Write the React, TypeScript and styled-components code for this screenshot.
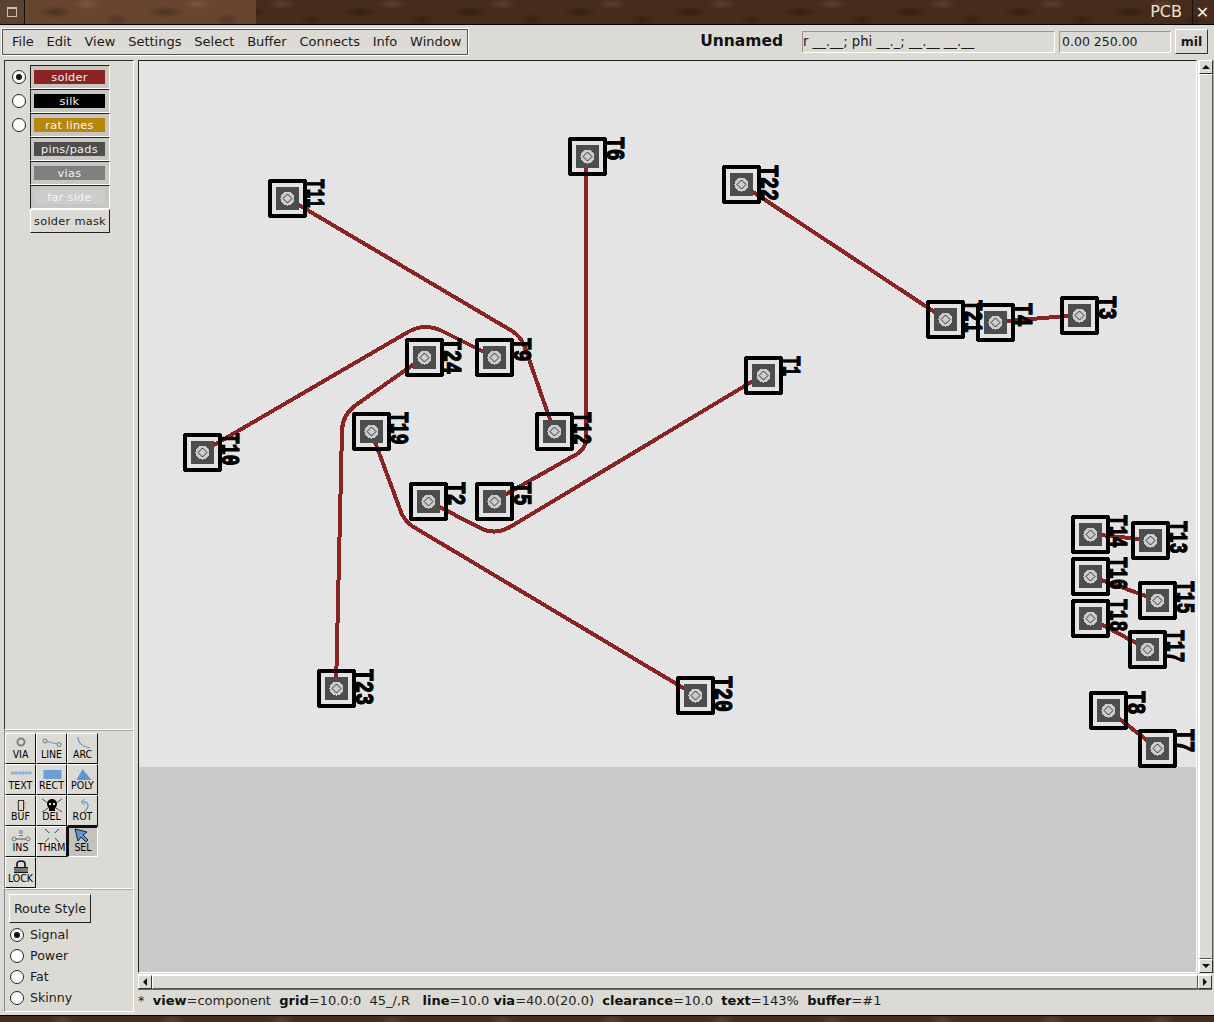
import React from "react";
import styled, { createGlobalStyle } from "styled-components";

const Global = createGlobalStyle`
  html, body { margin: 0; padding: 0; background: #3d2618; }
  #root { width: 1214px; height: 1022px; overflow: hidden; }
  * { box-sizing: border-box; }
`;

const wood = `
  radial-gradient(ellipse 26px 9px at 30px 12px, rgba(0,0,0,.28), transparent 70%),
  radial-gradient(ellipse 20px 8px at 62px 4px, rgba(255,220,180,.12), transparent 70%),
  radial-gradient(ellipse 18px 10px at 92px 20px, rgba(0,0,0,.22), transparent 70%)
`;

const Page = styled.div`
  width: 1214px; height: 1022px; display: flex; flex-direction: column;
  background: #dcdad5; font-family: "DejaVu Sans", sans-serif; color: #1a1a1a; font-size: 13px;
`;
const TitleBar = styled.div`
  height: 25px; flex: none; display: flex; align-items: stretch; border-bottom: 1px solid #000;
  background: ${wood}, #472c1b; background-size: 110px 24px; color: #eee6dc;
`;
const TitleCell = styled.div`
  width: 25px; flex: none; display: flex; align-items: center; justify-content: center;
  background: #5c4331; border-right: 1px solid #111;
`;
const WindowGlyph = styled.div`
  width: 10px; height: 10px; border: 1px solid #c9bfb2; border-top-width: 2px;
`;
const TitleWood = styled.div`
  width: 231px; flex: none; background: ${wood}, #68452e; background-size: 110px 24px;
`;
const TitleText = styled.div`
  flex: 1; text-align: right; font-size: 16px; line-height: 24px; padding-right: 10px; color: #e9e2d8;
`;
const CloseBox = styled.div`
  width: 22px; flex: none; border-left: 1px solid #111; display: flex; align-items: center; justify-content: center;
  font-size: 16px; font-weight: bold; color: #f3f0ea; padding-right: 2px;
`;
const TopRow = styled.div`
  height: 34px; flex: none; display: flex; align-items: center; padding: 0 6px 3px 1px;
`;
const MenuBar = styled.div`
  width: 468px; height: 28px; flex: none; display: flex; align-items: center; padding-left: 4px;
  border: 1px solid #fff; outline: 1px solid #555; outline-offset: -2px; margin-top: 2px;
`;
const MenuItem = styled.span`
  padding: 0 6.4px; white-space: nowrap; font-size: 13px;
  &:first-child { padding-left: 6px; }
`;
const FileName = styled.div`
  width: 333px; text-align: right; font-size: 15.5px; padding-right: 19px; flex: none;
  color: #111; font-weight: 700;
`;
const Readout = styled.div<{ $w: number; $fs: number; $pad: number }>`
  width: ${p => p.$w}px; height: 22px; flex: none; margin-right: 4px; padding-left: ${p => p.$pad}px;
  border: 1px solid #fff; border-top-color: #9a9892; border-left-color: #9a9892; line-height: 20px; font-size: ${p => p.$fs}px; white-space: nowrap;
  margin-top: 2px;
`;
const UnitButton = styled.div`
  width: 33px; height: 25px; flex: none; display: flex; align-items: center; justify-content: center; font-weight: bold;
  border: 1px solid #fff; border-right-color: #333; border-bottom-color: #333; font-size: 12.5px; margin-top: 2px;
`;
const Main = styled.div`
  flex: 1; display: flex; min-height: 0;
`;
const Sidebar = styled.div`
  width: 138px; flex: none; display: flex; flex-direction: column; padding: 1px 4px 3px 4px;
`;
const LayerPanel = styled.div`
  flex: 1; border: 1px solid #fff; border-top-color: #333; border-left-color: #333; padding: 4px 0 0 4px;
  display: flex; flex-direction: column;
`;
const LayerRow = styled.div`
  height: 24px; display: flex; align-items: center; padding-left: 21px; position: relative;
`;
const Radio = styled.span<{ $on?: boolean }>`
  width: 14px; height: 14px; border-radius: 50%; background: #fff; border: 1px solid #222; flex: none;
  display: flex; align-items: center; justify-content: center;
  &::after { content: ""; width: 6px; height: 6px; border-radius: 50%; background: ${p => (p.$on ? "#111" : "transparent")}; }
`;
const LayerRadio = styled(Radio)`
  position: absolute; left: 3px; top: 5px;
`;
const LayerButton = styled.div`
  width: 80px; height: 24px; padding: 4px 4px 4px 3px; background: #c8c6c0;
  border: 1px solid #fff; border-top-color: #222; border-left-color: #222;
`;
const LayerSwatch = styled.div<{ $c: string; $fg: string }>`
  height: 14px; background: ${p => p.$c}; color: ${p => p.$fg}; font-size: 11.3px; line-height: 15px;
  text-align: center; letter-spacing: .3px; white-space: nowrap;
`;
const MaskButton = styled.div`
  width: 80px; height: 24px; font-size: 11.3px; letter-spacing: .3px; line-height: 23px; text-align: center; white-space: nowrap;
  border: 1px solid #fff; border-right-color: #222; border-bottom-color: #222;
`;
const ToolPanel = styled.div`
  height: 159px; flex: none; padding: 2px 0 0 0; border: 1px solid #fff; border-left-color: #888; border-top-color: #aaa;
`;
const ToolGrid = styled.div`
  display: grid; grid-template-columns: repeat(3, 31px); grid-auto-rows: 31px;
`;
const ToolButton = styled.div<{ $on?: boolean }>`
  display: flex; flex-direction: column; align-items: center; justify-content: flex-start; padding-top: 1px;
  background: ${p => (p.$on ? "#c4c2bc" : "#dcdad5")};
  border: 1px solid #fff; border-right-color: #111; border-bottom-color: #111;
  ${p => p.$on && "border-color: #111 #fff #fff #111; border-width: 2px 1px 1px 2px; padding-top: 0;"}
  svg { display: block; flex: none; }
`;
const ToolLabel = styled.span`
  font-family: "DejaVu Sans Condensed", "Liberation Sans Narrow", sans-serif; font-size: 10.5px; line-height: 10px; color: #000; white-space: nowrap;
  margin-top: -2px;
`;
const RoutePanel = styled.div`
  height: 123px; flex: none; padding: 4px 0 0 4px; border: 1px solid #fff; border-left-color: #888; border-top-color: #aaa;
`;
const RouteButton = styled.div`
  width: 82px; height: 29px; display: flex; align-items: center; justify-content: center; font-size: 12.6px;
  border: 1px solid #fff; border-right-color: #222; border-bottom-color: #222; margin-bottom: 1px;
`;
const RouteRow = styled.div`
  height: 21px; display: flex; align-items: center; gap: 6px; padding-left: 1px; font-size: 12.6px;
`;
const Work = styled.div`
  flex: 1; min-width: 0; display: flex; flex-direction: column; padding-top: 1px;
`;
const CanvasRow = styled.div`
  display: flex; height: 913px; flex: none;
`;
const CanvasFrame = styled.div`
  width: 1059px; height: 913px; flex: none; border: 1px solid #fff; border-top: 1px solid #222; border-left: 1px solid #222;
  svg { display: block; overflow: visible; }
`;
const VScroll = styled.div`
  width: 16px; flex: none; margin-left: 1px; display: flex; flex-direction: column; border-left: 1px solid #fff; border-right: 1px solid #aaa;
`;
const HRow = styled.div`
  height: 16px; flex: none; margin-top: 1px; display: flex; border-top: 1px solid #fff; border-bottom: 1px solid #666; margin-right: 2px;
`;
const Arrow = styled.div<{ $dir: "up" | "down" | "left" | "right" }>`
  width: 14px; height: 14px; flex: none; display: flex; align-items: center; justify-content: center;
  border: 1px solid #fff; border-right-color: #333; border-bottom-color: #333;
  &::after {
    content: ""; width: 0; height: 0; border: 4px solid transparent;
    ${p => ({
      up: "border-bottom-color:#111; margin-top:-4px;",
      down: "border-top-color:#111; margin-top:4px;",
      left: "border-right-color:#111; margin-left:-4px;",
      right: "border-left-color:#111; margin-left:4px;",
    }[p.$dir])}
  }
`;
const Thumb = styled.div`
  flex: 1; border: 1px solid #fff; border-right-color: #555; border-bottom-color: #555;
`;
const StatusBar = styled.div`
  flex: none; height: 24px; display: flex; align-items: center; white-space: pre; font-size: 13px; color: #222;
  padding: 0 0 4px 0;
`;
const StatusValue = styled.span`
  font-size: 13px;
`;
const StatusKey = styled.b`
  font-weight: 700; color: #111; font-size: 13px;
`;
const BottomWood = styled.div`
  height: 7px; flex: none; border-top: 1px solid #000; background: ${wood}, #472c1b; background-size: 110px 24px;
`;
const PadLabel = styled.text`
  font-family: "Liberation Mono", monospace; font-weight: 700; font-size: 25px; fill: #000; stroke: #000; stroke-width: 1.2px;
`;

const layers = [
  { name: "solder", c: "#8b2323", fg: "#f2f2f2", radio: true, on: true },
  { name: "silk", c: "#000000", fg: "#f2f2f2", radio: true },
  { name: "rat lines", c: "#b8860b", fg: "#f6f6f6", radio: true },
  { name: "pins/pads", c: "#4d4d4d", fg: "#f2f2f2" },
  { name: "vias", c: "#7f7f7f", fg: "#f2f2f2" },
  { name: "far side", c: "#cccccc", fg: "#f4f4f4" },
];

const blue = "#5f97d2";
const icons: Record<string, React.ReactNode> = {
  VIA: <circle cx="11" cy="7" r="3.5" fill="none" stroke="#808080" strokeWidth="2" />,
  LINE: (
    <g fill="none" stroke="#777">
      <circle cx="4" cy="6" r="2" /><circle cx="18" cy="9.5" r="2" />
      <path d="M6 6.5 L16 9" stroke={blue} strokeWidth="1.2" />
    </g>
  ),
  ARC: <path d="M6 2 C6 8 11 12 18 13" fill="none" stroke={blue} strokeWidth="1.2" />,
  TEXT: (
    <g fill="none" stroke={blue} strokeWidth="0.9">
      {[2.5, 6, 9.5, 13, 16.5, 20].map(x => <circle key={x} cx={x} cy="7" r="1.2" />)}
    </g>
  ),
  RECT: <rect x="2.5" y="4" width="18" height="9" fill="#6a9fd8" />,
  POLY: <path d="M4.5 14 L10.5 3 L19.5 14 Z" fill={blue} />,
  BUF: (
    <g>
      <rect x="8.5" y="3.5" width="5" height="10" fill="none" stroke="#333" />
      <path d="M7 5h1.500M7 7h1.500M7 9h1.500M7 11h1.500M14 5h1.500M14 7h1.500M14 9h1.500M14 11h1.500" stroke="#b8912a" />
    </g>
  ),
  DEL: (
    <g>
      <path d="M1 2 L21 15 M21 2 L1 15" stroke="#555" strokeWidth="1" />
      <circle cx="11" cy="7" r="5" fill="#000" />
      <rect x="8" y="10" width="6" height="4" fill="#000" />
      <circle cx="9" cy="7" r="1.2" fill="#ddd" /><circle cx="13" cy="7" r="1.2" fill="#ddd" />
    </g>
  ),
  ROT: (
    <g>
      <path d="M11 5 C17 4 18 10 12 15" fill="none" stroke={blue} strokeWidth="1.3" />
      <path d="M13 2 L9 5 L13 8" fill="none" stroke={blue} strokeWidth="1" />
    </g>
  ),
  INS: (
    <g fill="none" stroke="#777">
      <circle cx="4" cy="11" r="2" /><circle cx="18" cy="11" r="2" />
      <path d="M6 11 H16" stroke="#555" /><circle cx="11" cy="4" r="1.5" /><path d="M9 7.500h4" />
    </g>
  ),
  THRM: (
    <g>
      <rect x="7" y="4" width="8" height="8" fill="#b8e8cc" />
      <path d="M4 1 L18 14 M18 1 L4 14" stroke="#444" />
      <rect x="8" y="5" width="6" height="6" fill="#dcdad5" />
    </g>
  ),
  SEL: <path d="M3 1 L6 13 L9 9 L14 14 L16 12 L11 7 L15 4 Z" fill={blue} stroke="#123" strokeWidth="1" />,
  LOCK: (
    <g>
      <path d="M7 8 V5 C7 1 15 1 15 5 V8" fill="none" stroke="#111" strokeWidth="1.6" />
      <rect x="4" y="8" width="14" height="6" fill="#111" />
      <path d="M4 10h14M4 12h14" stroke="#dcdad5" />
    </g>
  ),
};
const tools = ["VIA", "LINE", "ARC", "TEXT", "RECT", "POLY", "BUF", "DEL", "ROT", "INS", "THRM", "SEL", "LOCK"];

const pads: [string, number, number][] = [
  ["T6", 587, 156], ["T11", 287, 198], ["T22", 741, 184], ["T21", 945, 319], ["T4", 995, 322], ["T3", 1079, 315],
  ["T1", 763, 375], ["T24", 424, 357], ["T9", 494, 357], ["T12", 554, 431], ["T19", 371, 431], ["T10", 202, 452],
  ["T2", 428, 501], ["T5", 494, 501], ["T23", 336, 688], ["T20", 695, 695], ["T14", 1090, 534], ["T13", 1150, 540],
  ["T16", 1090, 576], ["T15", 1157, 600], ["T18", 1090, 618], ["T17", 1147, 649], ["T8", 1108, 710], ["T7", 1157, 748],
];
const traces = [
  "M586 156 V440 Q585 449 577 454 L494 501",
  "M287 198 L512 331 Q520 336 524 345 L554 431",
  "M202 452 L408 332 Q424 323 440 330 L494 357",
  "M424 357 L356 405 Q343 414 342 430 L336 688",
  "M371 431 L401 512 Q404 520 412 526 L695 695",
  "M428 501 L482 529 Q496 535 510 527 L763 375",
  "M741 184 L945 319",
  "M995 322 L1079 315",
  "M1090 534 L1150 540",
  "M1090 576 L1157 600",
  "M1090 618 L1147 649",
  "M1108 710 L1157 748",
];

const labelWidth = (name: string) =>
  [...name].reduce((sum, ch) => sum + (ch === "T" ? 11 : ch === "1" ? 9 : 12.5), 0);

function Board() {
  return (
    <svg width="1057" height="911" viewBox="139 61 1057 911" shapeRendering="crispEdges">
      <rect x="139" y="61" width="1057" height="706" fill="#e4e4e4" />
      <rect x="139" y="767" width="1057" height="205" fill="#cacaca" />
      <g fill="none" stroke="#8b2323" strokeWidth="4" strokeLinejoin="round">
        {traces.map(d => <path key={d} d={d} />)}
      </g>
      {pads.map(([n, x, y]) => (
        <g key={n}>
          <rect x={x - 11} y={y - 11} width="23" height="23" fill="#4d4d4d" />
          <circle cx={x + 0.5} cy={y + 0.5} r="7" fill="#cccccc" />
          <path d={`M${x + 0.5} ${y - 4} L${x + 5} ${y + 0.5} L${x + 0.5} ${y + 5} L${x - 4} ${y + 0.5} Z`} fill="none" stroke="#111" strokeWidth="0.8" shapeRendering="auto" />
        </g>
      ))}
      {pads.map(([n, x, y]) => (
        <g key={n}>
          <rect x={x - 17} y={y - 17} width="35" height="35" rx="1" fill="none" stroke="#000" strokeWidth="4" />
          <PadLabel
            transform={`translate(${x + 20} ${y - 19}) rotate(90)`}
            textLength={labelWidth(n)}
            lengthAdjust="spacingAndGlyphs"
          >
            {n}
          </PadLabel>
        </g>
      ))}
    </svg>
  );
}

export default function App() {
  return (
    <Page>
      <Global />
      <TitleBar>
        <TitleCell><WindowGlyph /></TitleCell>
        <TitleWood />
        <TitleText>PCB</TitleText>
        <CloseBox>✕</CloseBox>
      </TitleBar>
      <TopRow>
        <MenuBar>
          {["File", "Edit", "View", "Settings", "Select", "Buffer", "Connects", "Info", "Window"].map(m => <MenuItem key={m}>{m}</MenuItem>)}
        </MenuBar>
        <FileName>Unnamed</FileName>
        <Readout $w={253} $fs={13.2} $pad={0}>r __.__; phi __._; __.__ __.__</Readout>
        <Readout $w={112} $fs={12.5} $pad={2}>0.00 250.00</Readout>
        <UnitButton>mil</UnitButton>
      </TopRow>
      <Main>
        <Sidebar>
          <LayerPanel>
            {layers.map(l => (
              <LayerRow key={l.name}>
                {l.radio && <LayerRadio $on={l.on} />}
                <LayerButton><LayerSwatch $c={l.c} $fg={l.fg}>{l.name}</LayerSwatch></LayerButton>
              </LayerRow>
            ))}
            <LayerRow><MaskButton>solder mask</MaskButton></LayerRow>
          </LayerPanel>
          <ToolPanel>
            <ToolGrid>
              {tools.map(t => (
                <ToolButton key={t} $on={t === "SEL"}>
                  <svg width="22" height="16" viewBox="0 0 22 16">{icons[t]}</svg>
                  <ToolLabel>{t}</ToolLabel>
                </ToolButton>
              ))}
            </ToolGrid>
          </ToolPanel>
          <RoutePanel>
            <RouteButton>Route Style</RouteButton>
            {["Signal", "Power", "Fat", "Skinny"].map((r, i) => (
              <RouteRow key={r}><Radio $on={i === 0} />{r}</RouteRow>
            ))}
          </RoutePanel>
        </Sidebar>
        <Work>
          <CanvasRow>
            <CanvasFrame><Board /></CanvasFrame>
            <VScroll>
              <Arrow $dir="up" />
              <Thumb />
              <Arrow $dir="down" />
            </VScroll>
          </CanvasRow>
          <HRow>
            <Arrow $dir="left" />
            <Thumb />
            <Arrow $dir="right" />
          </HRow>
          <StatusBar>
            <StatusValue>*  </StatusValue><StatusKey>view</StatusKey><StatusValue>=component  </StatusValue>
            <StatusKey>grid</StatusKey><StatusValue>=10.0:0  45_/,R   </StatusValue>
            <StatusKey>line</StatusKey><StatusValue>=10.0 </StatusValue>
            <StatusKey>via</StatusKey><StatusValue>=40.0(20.0)  </StatusValue>
            <StatusKey>clearance</StatusKey><StatusValue>=10.0  </StatusValue>
            <StatusKey>text</StatusKey><StatusValue>=143%  </StatusValue>
            <StatusKey>buffer</StatusKey><StatusValue>=#1</StatusValue>
          </StatusBar>
        </Work>
      </Main>
      <BottomWood />
    </Page>
  );
}
